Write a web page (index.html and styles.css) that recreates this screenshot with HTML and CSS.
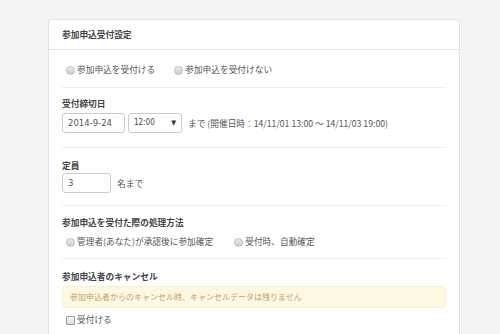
FILE: index.html
```html
<!DOCTYPE html>
<html lang="ja">
<head>
  <meta charset="UTF-8">
  <title>参加申込受付設定</title>
  <link rel="stylesheet" href="styles.css">
</head>
<body>

  <div class="panel">
    <div class="panel-head">参加申込受付設定</div>
    <div class="panel-body">

      <div class="section first">
        <div class="choices">
          <label class="choice"><span class="radio"></span>参加申込を受付ける</label>
          <label class="choice"><span class="radio"></span>参加申込を受付けない</label>
        </div>
      </div>

      <div class="section deadline">
        <div class="title">受付締切日</div>
        <div class="row">
          <div class="field date">2014-9-24</div>
          <div class="field select"><span>12:00</span><span class="arrow">▼</span></div>
          <span class="note">まで (開催日時：14/11/01 13:00 ～ 14/11/03 19:00)</span>
        </div>
      </div>

      <div class="section capacity">
        <div class="title">定員</div>
        <div class="row">
          <div class="field num">3</div>
          <span class="note">名まで</span>
        </div>
      </div>

      <div class="section method">
        <div class="title">参加申込を受付た際の処理方法</div>
        <div class="choices wide">
          <label class="choice"><span class="radio"></span>管理者(あなた)が承認後に参加確定</label>
          <label class="choice"><span class="radio"></span>受付時、自動確定</label>
        </div>
      </div>

      <div class="section cancel">
        <div class="title">参加申込者のキャンセル</div>
        <div class="alert">参加申込者からのキャンセル時、キャンセルデータは残りません</div>
        <label class="choice check"><span class="box"></span>受付ける</label>
      </div>

    </div>
  </div>

</body>
</html>
```

FILE: styles.css
```css
html, body {
  height: 334px;
  overflow: hidden;
}

body {
  margin: 0;
  padding: 19px 40px 0 48px;
  box-sizing: border-box;
  background: #f4f4f4;
  font-family: "Noto Sans CJK JP", "DejaVu Sans", sans-serif;
  font-size: 8.7px;
  color: #555;
}

.panel {
  width: 410px;
  height: 330px;
  background: white;
  border: 1px solid #e2e2e2;
  border-radius: 4px;
}

.panel-head {
  height: 29px;
  line-height: 29px;
  padding: 0 13px;
  font-weight: bold;
  color: #444;
  border-bottom: 1px solid #e6e6e6;
}

.panel-body {
  padding: 0 13px;
}

.section {
  border-top: 1px solid #eee;
}

.section.first {
  border-top: none;
  padding: 14px 0 11px;
}

.section.deadline { padding: 10px 0 14px; }
.section.capacity { padding: 12px 0 12px; }
.section.method   { padding: 11px 0 10px; }
.section.cancel   { padding: 12px 0 0; }

.title {
  line-height: 12px;
  font-weight: bold;
  color: #444;
  margin-bottom: 3px;
}

.capacity .title { margin-bottom: 1px; }
.method .title { margin-bottom: 7px; }
.cancel .title { margin-bottom: 3px; }

.row {
  display: flex;
  align-items: center;
  gap: 3px;
}

.field {
  height: 18px;
  line-height: 18px;
  border: 1px solid #ccc;
  border-radius: 3px;
  padding: 0 5px;
  color: #555;
}

.date {
  width: 51px;
  font-family: "DejaVu Sans", sans-serif;
  font-size: 8.5px;
}

.select {
  width: 42px;
  display: flex;
  justify-content: space-between;
  font-family: "DejaVu Sans Condensed", "DejaVu Sans", sans-serif;
  font-size: 8px;
  color: #444;
}

.arrow {
  font-size: 7px;
  color: #333;
}

.num {
  width: 37px;
  font-family: "DejaVu Sans", sans-serif;
  font-size: 8.5px;
}

.note {
  margin-left: 3px;
}

.choices {
  display: flex;
  gap: 19px;
  padding-left: 4px;
}

.choices.wide {
  gap: 21px;
}

.choice {
  display: flex;
  align-items: center;
  line-height: 12px;
  gap: 2px;
}

.radio {
  width: 7px;
  height: 7px;
  border: 1px solid #bbb;
  border-radius: 50%;
  background: linear-gradient(#eee, #ccc);
}

.alert {
  height: 20px;
  line-height: 20px;
  padding: 0 7px;
  background: #fcf8e3;
  border: 1px solid #faf0d0;
  border-radius: 3px;
  color: #c8a262;
  font-size: 8px;
  margin-bottom: 6px;
}

.check {
  padding-left: 4px;
}

.box {
  width: 7px;
  height: 7px;
  border: 1px solid #999;
  border-radius: 1px;
  background: linear-gradient(#f6f6f6, #ddd);
}
```
